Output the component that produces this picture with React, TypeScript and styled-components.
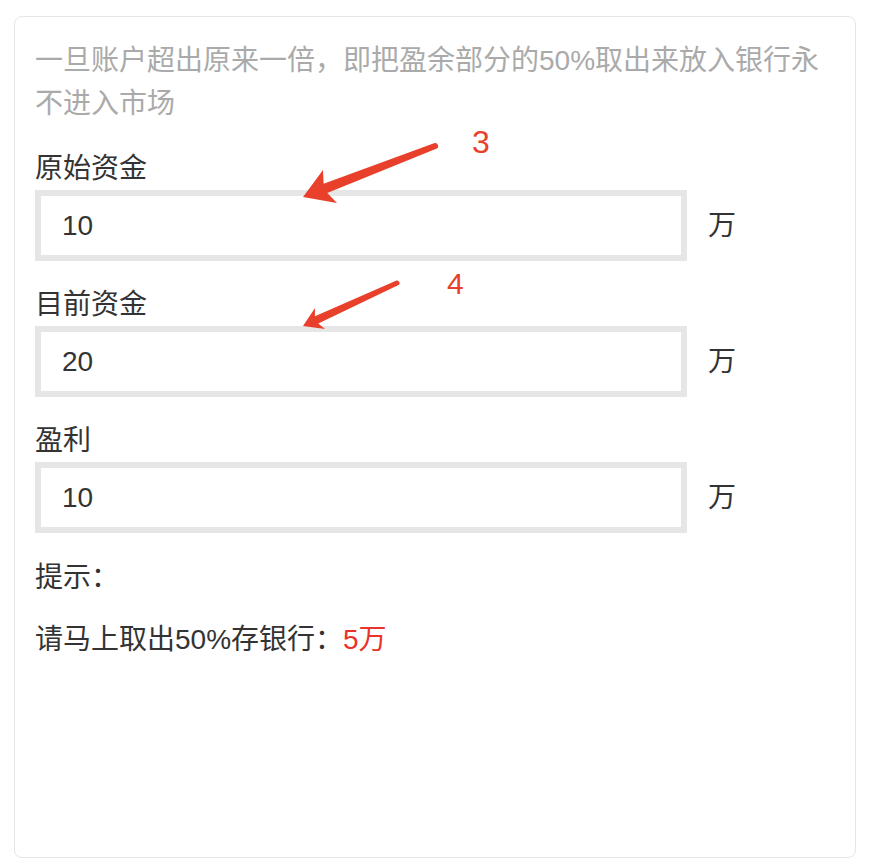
import styled, { createGlobalStyle } from 'styled-components'

const GlobalStyle = createGlobalStyle`
  html, body {
    margin: 0;
    padding: 0;
    background: #ffffff;
  }
  body {
    font-family: "Liberation Sans", "Noto Sans CJK SC", sans-serif;
  }
`

const Page = styled.div`
  padding: 16px 14px 10px 14px;
`

const Card = styled.div`
  position: relative;
  box-sizing: border-box;
  width: 842px;
  height: 842px;
  border: 1px solid #e5e5e5;
  border-radius: 8px;
  padding: 22px 20px;
  font-size: 28px;
  color: #333333;
`

const Intro = styled.p`
  margin: 0;
  color: #aaaaaa;
  line-height: 43px;
`

const Fields = styled.div`
  display: flex;
  flex-direction: column;
  gap: 23px;
  margin-top: 23px;
`

const Field = styled.div`
  display: flex;
  flex-direction: column;
`

const Label = styled.label`
  line-height: 42px;
`

const InputRow = styled.div`
  display: flex;
  align-items: center;
  gap: 21px;
`

const Input = styled.input`
  box-sizing: border-box;
  width: 652px;
  height: 71px;
  border: 6px solid #e6e6e6;
  border-radius: 0;
  padding: 0 21px;
  font-family: "Liberation Sans", "Noto Sans CJK SC", sans-serif;
  font-size: 28px;
  color: #333333;
  background: #ffffff;
  outline: none;
`

const Unit = styled.span`
  line-height: 42px;
`

const Hint = styled.p<{ $gap: number }>`
  margin: ${({ $gap }) => $gap}px 0 0 0;
  line-height: 42px;
`

const Amount = styled.span`
  color: #e8342a;
`

const Annotations = styled.svg`
  position: absolute;
  top: 0;
  left: 0;
  pointer-events: none;
  overflow: visible;
`

const AnnotationNumber = styled.text`
  font-family: "Liberation Sans", sans-serif;
  fill: #e8402a;
`

const fields = [
  { label: '原始资金', value: '10' },
  { label: '目前资金', value: '20' },
  { label: '盈利', value: '10' },
]

const strings = {
  intro: '一旦账户超出原来一倍，即把盈余部分的50%取出来放入银行永不进入市场',
  unit: '万',
  hint: '提示：',
  advice: '请马上取出50%存银行：',
  amount: '5万',
}

export default function App() {
  return (
    <>
      <GlobalStyle />
      <Page>
        <Card>
          <Intro>{strings.intro}</Intro>
          <Fields>
            {fields.map((field) => (
              <Field key={field.label}>
                <Label>{field.label}</Label>
                <InputRow>
                  <Input defaultValue={field.value} />
                  <Unit>{strings.unit}</Unit>
                </InputRow>
              </Field>
            ))}
          </Fields>
          <Hint $gap={24}>{strings.hint}</Hint>
          <Hint $gap={20}>
            {strings.advice}
            <Amount>{strings.amount}</Amount>
          </Hint>

          {/* annotation arrows, drawn in page coordinates */}
          <Annotations width="840" height="840" viewBox="15 17 840 840">
            <path
              d="M303,197 L323,170 L323.6,183.7 L434,143.2 A3,3 0 0 1 436.2,148.8 L327.2,193.1 L337,203 Z"
              fill="#e8402a"
            />
            <path
              d="M303,326 L315,308 L314.9,316.2 L396,280.7 A2.5,2.5 0 0 1 398,285.3 L318.3,323.4 L325,329 Z"
              fill="#e8402a"
            />
            <AnnotationNumber x="472" y="153" fontSize="32">3</AnnotationNumber>
            <AnnotationNumber x="447" y="294" fontSize="30">4</AnnotationNumber>
          </Annotations>
        </Card>
      </Page>
    </>
  )
}
